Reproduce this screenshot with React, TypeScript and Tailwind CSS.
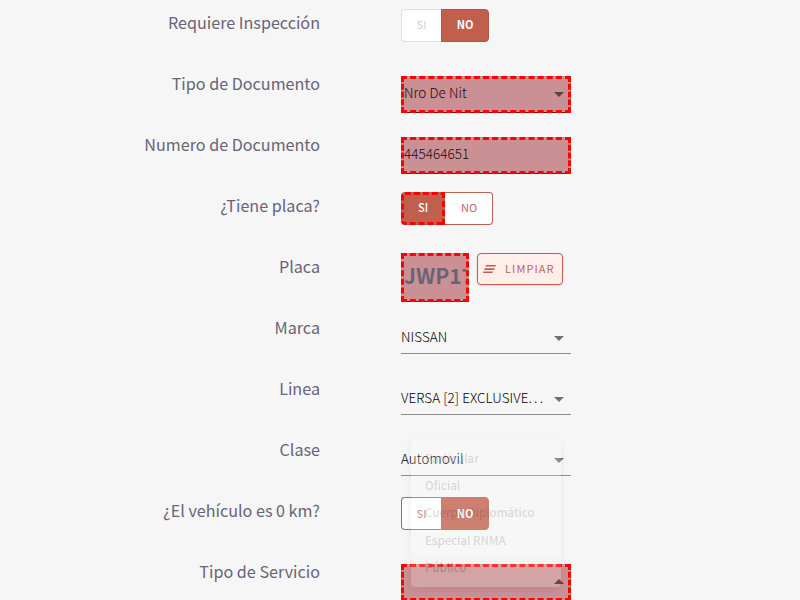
import type { ReactNode } from "react";

function Row({ label, children }: { label: string; children: ReactNode }) {
  return (
    <div className="flex h-[61px] shrink-0">
      <div className="w-80 pt-[7px] text-right text-[16.15px] leading-[30px] text-[#686478]">{label}</div>
      <div className="ml-[81px] w-[170px] shrink-0 pt-[9px]">{children}</div>
    </div>
  );
}

function Caret({ up = false }: { up?: boolean }) {
  return (
    <svg className="mr-[7px] h-[5px] w-[10px] shrink-0" viewBox="0 0 10 5">
      <path d={up ? "M0 5L5 0L10 5Z" : "M0 0L5 5L10 0Z"} fill="#000" fillOpacity=".54" />
    </svg>
  );
}

function Select({ value, clipped = false }: { value: string; clipped?: boolean }) {
  return (
    <div className="mt-[6px] flex h-[34px] items-start justify-between border-b border-[#8f8f8f] pt-[7px]">
      <span className="text-[13.4px] leading-[18px] font-light tracking-[0.1px] whitespace-nowrap text-black">
        {value}
        {clipped && <span className="tracking-[2.2px]">...</span>}
      </span>
      <span className="flex pt-[9px]"><Caret /></span>
    </div>
  );
}

function Marked({ value, caret = false }: { value: string; caret?: boolean }) {
  return (
    <div className="mt-[6px] flex h-[37px] items-start justify-between border-[3px] border-dashed border-[#ff0000] bg-[#cb9093] bg-[linear-gradient(#5a1018,#5a1018)] bg-[length:100%_1px] bg-bottom bg-no-repeat pt-1 [background-origin:border-box]">
      <span className="text-[13.4px] leading-[18px] font-light tracking-[0.1px] text-[#180810]">{value}</span>
      {caret && <span className="-mr-[3px] flex pt-[9px]"><Caret /></span>}
    </div>
  );
}

export default function App() {
  return (
    <main className="relative flex h-[600px] w-[800px] flex-col overflow-hidden bg-[#f6f6f6] font-['Noto_Sans_CJK_SC',sans-serif]">
      <Row label="Requiere Inspección">
        <div className="flex h-[33px] w-[88px] text-[11px] leading-[29px]">
          <span className="w-10 rounded-l border border-r-0 border-[#e0dfe0] bg-white text-center text-[#d9c8dc]">SI</span>
          <span className="w-12 rounded-r border border-[#b55347] bg-[#c15f4d] text-center font-bold text-white">NO</span>
        </div>
      </Row>
      <Row label="Tipo de Documento"><Marked value="Nro De Nit" caret /></Row>
      <Row label="Numero de Documento"><Marked value="445464651" /></Row>
      <Row label="¿Tiene placa?">
        <div className="flex h-[33px] w-[92px] text-[11px]">
          <span className="w-11 rounded-l border-[3px] border-dashed border-[#ff0000] bg-[#c15f4d] text-center leading-[25px] font-medium text-white">SI</span>
          <span className="w-12 rounded-r border border-l-0 border-[#c15f4d] bg-white pl-px text-center leading-[29px] text-[#b96a68]">NO</span>
        </div>
      </Row>
      <Row label="Placa">
        <div className="flex items-start gap-2">
          <div className="h-[49px] w-[68px] shrink-0 overflow-hidden border-[3px] border-dashed border-[#ff0000] bg-[#cb9093] bg-[linear-gradient(#5a1018,#5a1018)] bg-[length:100%_1px] bg-bottom bg-no-repeat text-[21px] leading-[39px] font-bold whitespace-nowrap text-[#686478] [background-origin:border-box]">JWP17</div>
          <div className="flex h-8 w-[86px] shrink-0 items-center rounded border border-[#c15f4d] bg-[#ffeeea] pl-[5px] text-[11px] leading-[28px] tracking-[1.1px] text-[#b8665d] shadow-sm">
            <svg className="mr-[9px] h-2 w-[13px]" viewBox="0 0 13 8" fill="#c15f4d"><path d="M3 0H13L12.5 1.4H2.5ZM1.8 3.2H11.8L11.2 5H1.1ZM.5 6.5H10L9.4 8H0Z" /></svg>
            <span className="-mt-[2px]">LIMPIAR</span>
          </div>
        </div>
      </Row>
      <Row label="Marca"><Select value="NISSAN" /></Row>
      <Row label="Linea"><Select value="VERSA [2] EXCLUSIVE" clipped /></Row>
      <Row label="Clase"><Select value="Automovil" /></Row>
      <Row label="¿El vehículo es 0 km?">
        <div className="flex h-[33px] w-[88px] text-[11px] leading-[30px]">
          <span className="w-10 rounded-l border border-r-0 border-[#c15f4d] bg-white text-center text-[#b96a68]">SI</span>
          <span className="w-12 rounded-r border border-[#c15f4d] bg-[#c15f4d] text-center font-bold text-white">NO</span>
        </div>
      </Row>
      <Row label="Tipo de Servicio"><Marked value="" /></Row>
      <div className="absolute top-[439px] left-[411px] flex h-[148px] w-[150px] flex-col rounded-sm bg-white/20 pt-[6px] text-[11.5px] leading-[27.2px] font-medium text-black/15 shadow-[0_3px_8px_rgba(0,0,0,0.07)]">
        <p className="pl-[14px]">Particular</p>
        <p className="pl-[14px]">Oficial</p>
        <p className="pl-[14px]">Cuerpo Diplomático</p>
        <p className="pl-[14px]">Especial RNMA</p>
        <p className="grow bg-black/[0.01] pl-[14px] text-black/20">Público</p>
      </div>
      <div className="absolute top-[579px] left-[554px]"><Caret up /></div>
    </main>
  );
}
